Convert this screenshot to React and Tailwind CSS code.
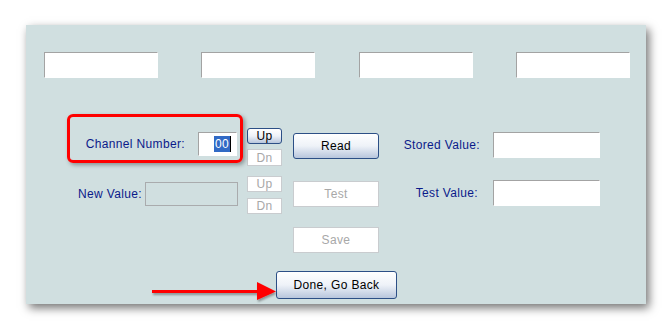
export default function App() {
  const font = { fontFamily: '"Liberation Sans", Arial, sans-serif' };
  const field =
    "bg-white border border-t-[#a3a3a3] border-l-[#a3a3a3] border-r-white border-b-white";
  const btnOn =
    "border border-[#2c4f86] rounded-[3px] bg-gradient-to-b from-white via-[#eef2f8] to-[#b8c6dc] text-black flex items-center justify-center";
  const btnOff =
    "border border-[#c9cccf] bg-white text-[#a8a8a8] flex items-center justify-center";

  return (
    <div
      className="relative w-[672px] h-[330px] bg-white overflow-hidden text-[12px] tracking-[0.35px]"
      style={font}
    >
      <div className="relative ml-[26px] mt-[25px] w-[620px] h-[279px] bg-[#d0dfe0] shadow-[3px_4px_9px_rgba(0,0,0,0.55)]">
        {/* top row of blank boxes */}
        <div className="flex pt-[27px] pl-[18px] gap-[43px]">
          <div className={`${field} w-[114px] h-[26px]`} />
          <div className={`${field} w-[114px] h-[26px]`} />
          <div className={`${field} w-[114px] h-[26px] ml-[1px]`} />
          <div className={`${field} w-[114px] h-[26px]`} />
        </div>

        {/* channel row */}
        <div className="flex items-start mt-[50px] h-[38px]">
          <div className="w-[211px] mt-[4px] flex items-center justify-end gap-[13px] text-[#0b1a8a]">
            <span>Channel Number:</span>
            <div className={`${field} w-[39px] h-[24px] flex items-center justify-end pr-[5px]`}>
              <span className="bg-[#316ac5] text-white leading-[16px] px-[1px]">00</span>
              <span className="w-[1px] h-[16px] bg-black" />
            </div>
          </div>
          <div className="ml-[10px] flex flex-col gap-[5px]">
            <div className={`${btnOn} w-[35px] h-[16px]`}>Up</div>
            <div className={`${btnOff} w-[35px] h-[17px]`}>Dn</div>
          </div>
          <div className={`${btnOn} ml-[11px] mt-[5px] w-[86px] h-[26px]`}>Read</div>
          <div className="mt-[4px] w-[221px] flex items-center justify-end gap-[13px] text-[#0b1a8a]">
            <span>Stored Value:</span>
            <div className={`${field} w-[107px] h-[26px]`} />
          </div>
        </div>

        {/* new value row */}
        <div className="flex items-start mt-[10px] h-[38px]">
          <div className="w-[212px] mt-[6px] flex items-center justify-end gap-[3px] text-[#0b1a8a]">
            <span>New Value:</span>
            <div className="w-[93px] h-[24px] border border-[#a9abad] bg-[#d0dfe0]" />
          </div>
          <div className="ml-[9px] flex flex-col gap-[6px]">
            <div className={`${btnOff} w-[35px] h-[16px]`}>Up</div>
            <div className={`${btnOff} w-[35px] h-[16px]`}>Dn</div>
          </div>
          <div className={`${btnOff} ml-[11px] mt-[5px] w-[86px] h-[26px]`}>Test</div>
          <div className="mt-[4px] w-[221px] flex items-center justify-end gap-[15px] text-[#0b1a8a]">
            <span>Test Value:</span>
            <div className={`${field} w-[107px] h-[26px]`} />
          </div>
        </div>

        <div className="pl-[267px] mt-[13px]">
          <div className={`${btnOff} w-[86px] h-[26px]`}>Save</div>
        </div>

        <div className="pl-[250px] mt-[18px]">
          <div className={`${btnOn} w-[121px] h-[28px]`}>Done, Go Back</div>
        </div>

        {/* annotation box */}
        <div className="absolute left-[41px] top-[89px] w-[176px] h-[49px] border-[3px] border-[#f00] rounded-[6px] shadow-[2px_2px_4px_rgba(0,0,0,0.35)]" />
      </div>

      {/* annotation arrow */}
      <svg
        className="absolute left-[148px] top-[278px]"
        width="132"
        height="26"
        viewBox="0 0 132 26"
      >
        <defs>
          <filter id="s" x="-10%" y="-30%" width="130%" height="180%">
            <feDropShadow dx="1" dy="2" stdDeviation="1.2" floodColor="#000" floodOpacity="0.35" />
          </filter>
        </defs>
        <g filter="url(#s)">
          <rect x="4" y="12" width="108" height="3" fill="#f00" />
          <polygon points="109,4 128,13.5 109,22" fill="#f00" />
        </g>
      </svg>
    </div>
  );
}
